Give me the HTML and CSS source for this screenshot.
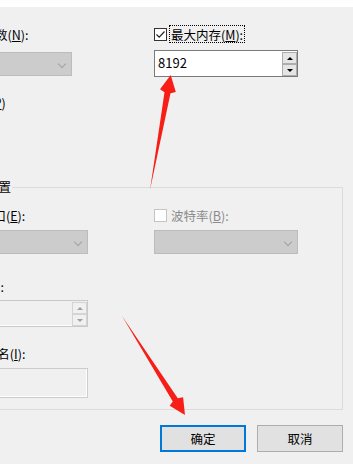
FILE: index.html
```html
<!DOCTYPE html>
<html lang="zh-CN">
<head>
  <meta charset="UTF-8" />
  <meta name="viewport" content="width=device-width, initial-scale=1.0"/>
  <title>引导高级选项</title>
  <link rel="stylesheet" href="styles.css">
</head>
<body>

  <div class="window">
    <div class="titlebar"></div>

    <div class="dialog">
      <!-- top options -->
      <div class="row first">
        <div class="col">
          <label class="check"><span class="box"></span><span class="text">处理器个数(<u>N</u>):</span></label>
        </div>
        <div class="col right">
          <label class="check"><span class="box checked"><svg width="11" height="11" viewBox="0 0 11 11"><path d="M1.5 5.5 L4.2 8.2 L9.5 2.5" fill="none" stroke="#222" stroke-width="1.2"/></svg></span><span class="text focus">最大内存(<u>M</u>):</span></label>
        </div>
      </div>

      <div class="row controls">
        <div class="col">
          <div class="combo disabled"><span class="chevron"></span></div>
        </div>
        <div class="col right">
          <div class="spin">
            <span class="spin-value">8192</span>
            <span class="spin-btns"><span class="spin-btn"><i class="up"></i></span><span class="spin-btn"><i class="down"></i></span></span>
          </div>
        </div>
      </div>

      <div class="row pci">
        <label class="check"><span class="box"></span><span class="text">PCI 锁定(<u>P</u>)</span></label>
      </div>
      <div class="row debug">
        <label class="check"><span class="box"></span><span class="text">调试(<u>G</u>)</span></label>
      </div>

      <!-- global debug settings -->
      <fieldset class="group">
        <legend>全局调试设置</legend>

        <div class="row group-first">
          <div class="col">
            <label class="check"><span class="box"></span><span class="text">调试端口(<u>E</u>):</span></label>
          </div>
          <div class="col right">
            <label class="check disabled"><span class="box"></span><span class="text">波特率(<u>B</u>):</span></label>
          </div>
        </div>

        <div class="row combos">
          <div class="col">
            <div class="combo disabled wide"><span class="chevron"></span></div>
          </div>
          <div class="col right">
            <div class="combo disabled"><span class="chevron"></span></div>
          </div>
        </div>

        <div class="row channel">
          <label class="check"><span class="box"></span><span class="text">通道(<u>C</u>):</span></label>
        </div>
        <div class="row channel-spin">
          <div class="spin disabled wide">
            <span class="spin-value"></span>
            <span class="spin-btns"><span class="spin-btn"><i class="up"></i></span><span class="spin-btn"><i class="down"></i></span></span>
          </div>
        </div>

        <div class="row usb">
          <span class="plain">USB 目标名(<u>I</u>):</span>
        </div>
        <div class="row usb-box">
          <div class="textbox disabled wide"></div>
        </div>
      </fieldset>

      <div class="buttons">
        <button class="btn default">确定</button>
        <button class="btn">取消</button>
      </div>
    </div>

    <!-- red annotation arrows -->
    <svg class="arrows" width="353" height="464" viewBox="0 0 353 464">
      <polygon points="150,190 164.5,92.2 160,89.3 170.7,75 175.8,92.1 170.5,93.2" fill="#f71e17"/>
      <polygon points="122,316 177.8,398.2 183.1,397.2 185,415 169.7,405.8 172.8,401.4" fill="#f71e17"/>
    </svg>
  </div>

</body>
</html>
```

FILE: styles.css
```css
body {
  margin: 0;
  font-family: "Noto Sans CJK SC", "Noto Sans", sans-serif;
  font-size: 12.5px;
  color: #000;
  background: #f0f0f0;
}
.window {
  position: relative;
  width: 353px;
  height: 464px;
  overflow: hidden;
  background: #f0f0f0;
}
.titlebar {
  height: 7px;
  background: #fff;
}
.dialog {
  margin-left: -80px;
  width: 423px;
  padding-top: 18px;
}
.row {
  display: flex;
  padding-left: 8px;
}
.col { width: 226px; }
.col.right { width: 144px; }
.row.controls { margin-top: 7px; }
.row.pci { margin-top: 16px; padding-left: 5px; }
.row.debug { margin-top: 11px; }

/* checkbox + label */
.check {
  display: flex;
  align-items: center;
  height: 18px;
  line-height: 16px;
}
.box {
  width: 13px;
  height: 13px;
  box-sizing: border-box;
  border: 1px solid #333;
  background: #fff;
  display: flex;
  align-items: center;
  justify-content: center;
}
.check .text {
  margin-left: 2px;
  padding: 0 1px;
  height: 18px;
  line-height: 17px;
  box-sizing: border-box;
  border: 1px solid transparent;
}
.check .text.focus { border: 1px dotted #000; }
.check.disabled .box { border-color: #c4c4c4; }
.check.disabled .text { color: #8c8c8c; }
u { text-decoration-thickness: 1px; text-underline-offset: 1px; }

/* combo box */
.combo {
  position: relative;
  width: 144px;
  height: 24px;
  margin-top: 2px;
  box-sizing: border-box;
  border: 1px solid #bcbcbc;
  background: #fff;
}
.combo.disabled { background: #cccccc; }
.combo .chevron {
  position: absolute;
  right: 6px;
  top: 8px;
  width: 5px;
  height: 5px;
  border-right: 1px solid #a2a2a2;
  border-bottom: 1px solid #a2a2a2;
  transform: rotate(45deg);
}

/* spin box */
.spin {
  width: 144px;
  height: 27px;
  box-sizing: border-box;
  border: 1px solid #7a7a7a;
  background: #fff;
  display: flex;
}
.spin-value {
  flex: 1;
  padding-left: 3px;
  font-size: 13px;
  line-height: 24px;
}
.spin-btns {
  display: flex;
  flex-direction: column;
  padding-top: 1px;
}
.spin-btn {
  width: 15px;
  height: 12px;
  box-sizing: border-box;
  border: 1px solid #adadad;
  background: #e5e5e5;
  display: flex;
  align-items: center;
  justify-content: center;
}
.spin-btn i {
  width: 0;
  height: 0;
  border-left: 3px solid transparent;
  border-right: 3px solid transparent;
}
.spin-btn .up { border-bottom: 3px solid #000; }
.spin-btn .down { border-top: 3px solid #000; }
.spin.disabled {
  border-color: #c9c9c9;
  background: #f0f0f0;
  box-shadow: inset -1px -1px 0 #fff;
}
.spin.disabled .spin-btn {
  border-color: #d4d4d4;
  background: #f0f0f0;
}
.spin.disabled .spin-btn .up { border-bottom-color: #a0a0a0; }
.spin.disabled .spin-btn .down { border-top-color: #a0a0a0; }

/* group box */
.group {
  margin: 39px 0 0 4px;
  width: 419px;
  box-sizing: border-box;
  padding: 0 0 11px 14px;
  border: 1px solid #dcdcdc;
  min-inline-size: 0;
}
.group legend {
  margin-left: -4px;
  padding: 0 1px;
  line-height: 16px;
}
.group .row { padding-left: 0; }
.group .col { width: 215px; }
.group .col.right { width: 144px; }
.row.group-first { margin-top: 11px; }
.row.combos { margin-top: 4px; }
.group .row.channel { margin-top: 23px; padding-left: 3px; }
.row.channel-spin { margin-top: 5px; }
.group .row.usb { margin-top: 18px; padding-left: 6px; }
.row.usb-box { margin-top: 5px; }
.plain {
  height: 18px;
  line-height: 18px;
}
.wide { width: 149px; }
.textbox {
  height: 30px;
  box-sizing: border-box;
  border: 1px solid #cccccc;
  background: #f0f0f0;
  box-shadow: inset -1px -1px 0 #fff;
}

/* buttons */
.buttons {
  display: flex;
  justify-content: flex-end;
  gap: 11px;
  margin-top: 15px;
}
.btn {
  width: 86px;
  height: 27px;
  box-sizing: border-box;
  border: 1px solid #adadad;
  background: #e1e1e1;
  font-family: inherit;
  font-size: 12.5px;
  color: #000;
  padding: 0;
  line-height: 24px;
}
.btn.default { border: 2px solid #0078d7; }

.arrows {
  position: absolute;
  top: 0;
  left: 0;
  pointer-events: none;
}
```
